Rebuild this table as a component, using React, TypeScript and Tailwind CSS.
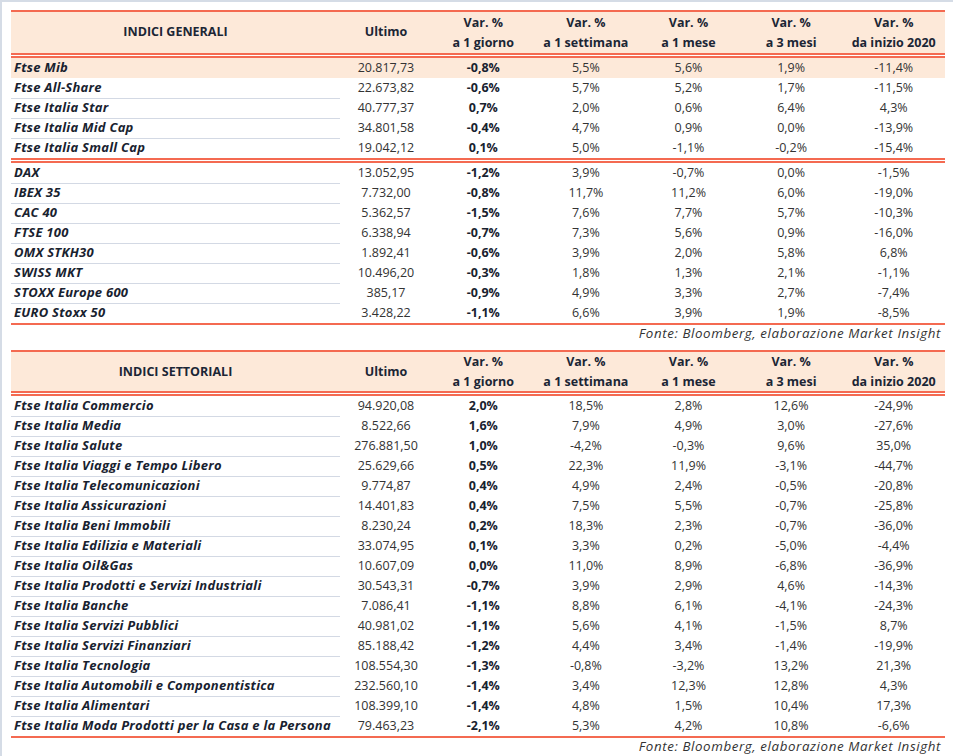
import React from 'react';

type Row = [string, string, string, string, string, string, string];

const generali: Row[][] = [
  [
    ['Ftse Mib', '20.817,73', '-0,8%', '5,5%', '5,6%', '1,9%', '-11,4%'],
    ['Ftse All-Share', '22.673,82', '-0,6%', '5,7%', '5,2%', '1,7%', '-11,5%'],
    ['Ftse Italia Star', '40.777,37', '0,7%', '2,0%', '0,6%', '6,4%', '4,3%'],
    ['Ftse Italia Mid Cap', '34.801,58', '-0,4%', '4,7%', '0,9%', '0,0%', '-13,9%'],
    ['Ftse Italia Small Cap', '19.042,12', '0,1%', '5,0%', '-1,1%', '-0,2%', '-15,4%'],
  ],
  [
    ['DAX', '13.052,95', '-1,2%', '3,9%', '-0,7%', '0,0%', '-1,5%'],
    ['IBEX 35', '7.732,00', '-0,8%', '11,7%', '11,2%', '6,0%', '-19,0%'],
    ['CAC 40', '5.362,57', '-1,5%', '7,6%', '7,7%', '5,7%', '-10,3%'],
    ['FTSE 100', '6.338,94', '-0,7%', '7,3%', '5,6%', '0,9%', '-16,0%'],
    ['OMX STKH30', '1.892,41', '-0,6%', '3,9%', '2,0%', '5,8%', '6,8%'],
    ['SWISS MKT', '10.496,20', '-0,3%', '1,8%', '1,3%', '2,1%', '-1,1%'],
    ['STOXX Europe 600', '385,17', '-0,9%', '4,9%', '3,3%', '2,7%', '-7,4%'],
    ['EURO Stoxx 50', '3.428,22', '-1,1%', '6,6%', '3,9%', '1,9%', '-8,5%'],
  ],
];

const settoriali: Row[][] = [
  [
    ['Ftse Italia Commercio', '94.920,08', '2,0%', '18,5%', '2,8%', '12,6%', '-24,9%'],
    ['Ftse Italia Media', '8.522,66', '1,6%', '7,9%', '4,9%', '3,0%', '-27,6%'],
    ['Ftse Italia Salute', '276.881,50', '1,0%', '-4,2%', '-0,3%', '9,6%', '35,0%'],
    ['Ftse Italia Viaggi e Tempo Libero', '25.629,66', '0,5%', '22,3%', '11,9%', '-3,1%', '-44,7%'],
    ['Ftse Italia Telecomunicazioni', '9.774,87', '0,4%', '4,9%', '2,4%', '-0,5%', '-20,8%'],
    ['Ftse Italia Assicurazioni', '14.401,83', '0,4%', '7,5%', '5,5%', '-0,7%', '-25,8%'],
    ['Ftse Italia Beni Immobili', '8.230,24', '0,2%', '18,3%', '2,3%', '-0,7%', '-36,0%'],
    ['Ftse Italia Edilizia e Materiali', '33.074,95', '0,1%', '3,3%', '0,2%', '-5,0%', '-4,4%'],
    ['Ftse Italia Oil&Gas', '10.607,09', '0,0%', '11,0%', '8,9%', '-6,8%', '-36,9%'],
    ['Ftse Italia Prodotti e Servizi Industriali', '30.543,31', '-0,7%', '3,9%', '2,9%', '4,6%', '-14,3%'],
    ['Ftse Italia Banche', '7.086,41', '-1,1%', '8,8%', '6,1%', '-4,1%', '-24,3%'],
    ['Ftse Italia Servizi Pubblici', '40.981,02', '-1,1%', '5,6%', '4,1%', '-1,5%', '8,7%'],
    ['Ftse Italia Servizi Finanziari', '85.188,42', '-1,2%', '4,4%', '3,4%', '-1,4%', '-19,9%'],
    ['Ftse Italia Tecnologia', '108.554,30', '-1,3%', '-0,8%', '-3,2%', '13,2%', '21,3%'],
    ['Ftse Italia Automobili e Componentistica', '232.560,10', '-1,4%', '3,4%', '12,3%', '12,8%', '4,3%'],
    ['Ftse Italia Alimentari', '108.399,10', '-1,4%', '4,8%', '1,5%', '10,4%', '17,3%'],
    ['Ftse Italia Moda Prodotti per la Casa e la Persona', '79.463,23', '-2,1%', '5,3%', '4,2%', '10,8%', '-6,6%'],
  ],
];

const periods = ['a 1 giorno', 'a 1 settimana', 'a 1 mese', 'a 3 mesi', 'da inizio 2020'];

const cols = 'grid grid-cols-[329px_92px_repeat(5,minmax(0,1fr))]';

const DoubleLine = () => <div className="h-[5px] border-y-2 border-[#f46a51] bg-white" />;

const DataRow = ({ row, highlight, last }: { row: Row; highlight: boolean; last: boolean }) => (
  <div className={`${cols} h-[20px] items-stretch ${highlight ? 'bg-[#fde9d9]' : ''}`}>
    <div
      className={`flex items-center pl-[3px] text-[13px] font-bold italic tracking-[0.25px] text-[#18222f] ${
        highlight || last ? '' : 'border-b border-[#d3d9e4]'
      }`}
    >
      {row[0]}
    </div>
    {row.slice(1).map((v, i) => (
      <div
        key={i}
        className={`flex items-center justify-center ${i === 1 ? 'font-bold text-[#18222f]' : 'text-[#333333]'}`}
      >
        {v}
      </div>
    ))}
  </div>
);

const Table = ({
  title,
  groups,
  headerClass,
  highlightFirst,
}: {
  title: string;
  groups: Row[][];
  headerClass: string;
  highlightFirst?: boolean;
}) => (
  <div>
    <div className={`${cols} ${headerClass} border-t-2 border-[#f46a51] bg-[#fde9d9] font-bold text-[#1b2635]`}>
      <div className="flex items-center justify-center">{title}</div>
      <div className="flex items-center justify-center">Ultimo</div>
      {periods.map((p) => (
        <div key={p} className="flex flex-col items-center justify-center leading-[20px]">
          <span>Var. %</span>
          <span>{p}</span>
        </div>
      ))}
    </div>
    {groups.map((g, gi) => (
      <div key={gi}>
        <DoubleLine />
        {g.map((r, ri) => (
          <DataRow key={r[0]} row={r} highlight={!!highlightFirst && gi === 0 && ri === 0} last={ri === g.length - 1} />
        ))}
      </div>
    ))}
    <div className="h-[2px] bg-[#f46a51]" />
    <div className="h-[16px] pr-[4px] text-right text-[13.33px] italic leading-[16px] tracking-[0.6px] text-[#333333]">
      Fonte: Bloomberg, elaborazione Market Insight
    </div>
  </div>
);

export default function App() {
  return (
    <div className="min-h-screen border-l-2 border-t-2 border-[#d5dce6] bg-white font-['Open_Sans',sans-serif] text-[12.5px]">
      <div className="ml-[9px] mt-[8px] flex w-[934px] flex-col gap-[9px]">
        <Table title="INDICI GENERALI" groups={generali} headerClass="h-[43px]" highlightFirst />
        <Table title="INDICI SETTORIALI" groups={settoriali} headerClass="h-[41px]" />
      </div>
    </div>
  );
}
